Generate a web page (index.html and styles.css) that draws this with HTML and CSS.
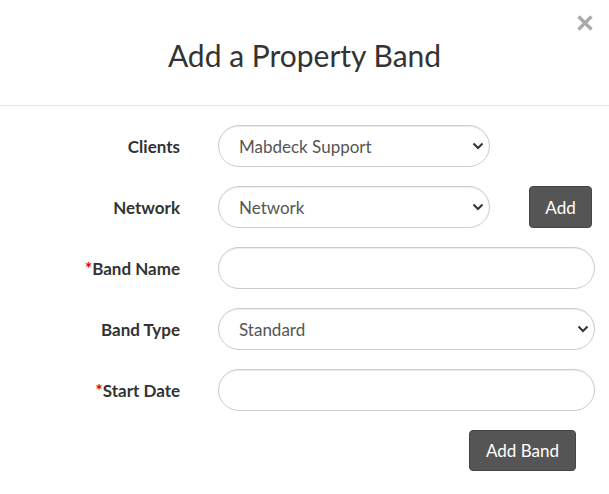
FILE: index.html
```html
<!DOCTYPE html>
<html>
<head>
<meta charset="utf-8">
<link rel="stylesheet" href="styles.css">
</head>
<body>
<div class="modal">
  <div class="modal-header">
    <h1 class="title">Add a Property Band</h1>
    <button class="close" aria-label="Close">
      <svg width="18" height="18" viewBox="0 0 18 18"><path d="M2.5 2.5 L15.5 15.5 M15.5 2.5 L2.5 15.5" stroke="#aaaaaa" stroke-width="3.4" stroke-linecap="butt"/></svg>
    </button>
  </div>
  <form class="form">
    <label class="label">Clients</label>
    <div class="field">
      <div class="select-wrap short">
        <select class="control"><option>Mabdeck Support</option></select>
        <svg class="chev" width="12" height="8" viewBox="0 0 12 8"><path d="M1.5 1.5 L6 6 L10.5 1.5" fill="none" stroke="#333" stroke-width="2"/></svg>
      </div>
    </div>

    <label class="label">Network</label>
    <div class="field network">
      <div class="select-wrap short">
        <select class="control"><option>Network</option></select>
        <svg class="chev" width="12" height="8" viewBox="0 0 12 8"><path d="M1.5 1.5 L6 6 L10.5 1.5" fill="none" stroke="#333" stroke-width="2"/></svg>
      </div>
      <button type="button" class="btn btn-add">Add</button>
    </div>

    <label class="label"><span class="req">*</span>Band Name</label>
    <div class="field"><input class="control" type="text"></div>

    <label class="label">Band Type</label>
    <div class="field">
      <div class="select-wrap">
        <select class="control"><option>Standard</option></select>
        <svg class="chev" width="12" height="8" viewBox="0 0 12 8"><path d="M1.5 1.5 L6 6 L10.5 1.5" fill="none" stroke="#333" stroke-width="2"/></svg>
      </div>
    </div>

    <label class="label"><span class="req">*</span>Start Date</label>
    <div class="field"><input class="control" type="text"></div>

    <div class="actions">
      <button type="button" class="btn btn-submit">Add Band</button>
    </div>
  </form>
</div>
</body>
</html>
```
FILE: styles.css
```css
* { box-sizing: border-box; }
html, body { margin: 0; padding: 0; background: #fff; }
body {
  font-family: Lato, "Open Sans", "Liberation Sans", sans-serif;
  color: #333;
  width: 609px;
  height: 494px;
  overflow: hidden;
}
.modal { width: 609px; }
.modal-header {
  position: relative;
  height: 106px;
  border-bottom: 1px solid #e5e5e5;
  display: flex;
  align-items: center;
  justify-content: center;
}
.title {
  margin: 0;
  padding-top: 4px;
  font-size: 30px;
  font-weight: 400;
  color: #333;
  line-height: 1;
}
.close {
  position: absolute;
  top: 14px;
  right: 15px;
  background: none;
  border: 0;
  padding: 0;
  width: 18px;
  height: 18px;
  display: flex;
}
.form {
  display: grid;
  grid-template-columns: 180px 377px;
  column-gap: 38px;
  row-gap: 19px;
  padding-top: 19px;
}
.label {
  font-size: 17px;
  font-weight: 700;
  text-align: right;
  align-self: center;
  color: #333;
}
.req { color: #e00000; font-weight: 700; }
.field { display: flex; align-items: center; height: 42px; }
.network { justify-content: space-between; }
.select-wrap { position: relative; width: 100%; height: 42px; }
.select-wrap.short { width: 272px; }
.control {
  width: 100%;
  height: 42px;
  border: 1px solid #ccc;
  border-radius: 21px;
  background: #fff;
  box-shadow: inset 0 1px 1px rgba(0,0,0,.075);
  font-family: inherit;
  font-size: 17px;
  color: #555;
  padding: 0 30px 0 20px;
  outline: none;
  -webkit-appearance: none;
  appearance: none;
}
.chev {
  position: absolute;
  right: 6px;
  top: 17px;
  pointer-events: none;
}
.btn {
  background: #555;
  color: #fff;
  border: 1px solid #444;
  border-radius: 4px;
  font-family: inherit;
  font-size: 17px;
  height: 42px;
  padding: 0;
}
.btn-add { width: 63px; margin-right: 3px; margin-left: auto; }
.actions {
  grid-column: 1 / 3;
  display: flex;
  justify-content: flex-end;
  padding-right: 19px;
}
.btn-submit { width: 107px; height: 41px; }
```
